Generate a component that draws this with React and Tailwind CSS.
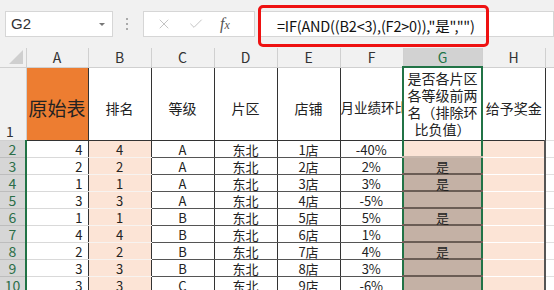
import { X, Check } from 'lucide-react';

const rows = [
    ['4', 'A', '1店', '-40%', ''],
    ['2', 'A', '2店', '2%', '是'],
    ['1', 'A', '3店', '3%', '是'],
    ['3', 'A', '4店', '-5%', ''],
    ['1', 'B', '5店', '5%', '是'],
    ['4', 'B', '6店', '1%', ''],
    ['2', 'B', '7店', '4%', '是'],
    ['3', 'B', '8店', '3%', ''],
    ['3', 'C', '9店', '-6%', ''],
];

const cols = ['A', 'B', 'C', 'D', 'E', 'F', 'G', 'H'];
const widths = [62, 63, 63, 63, 63, 63, 79, 63];

export default function App() {
    return (
        <div className="w-[554px] h-[290px] overflow-hidden bg-white text-[#222] font-['Noto_Sans_CJK_SC',sans-serif]">
            {/* Formula bar */}
            <div className="h-[48px] bg-[#f1f1f1] flex items-center relative">
                <div className="ml-[5px] w-[108px] h-[26px] bg-white border border-[#d6d6d6] flex items-center justify-between pl-[5px] pr-[7px]">
                    <span className="text-[15px] font-['Liberation_Sans',sans-serif] text-[#333]">G2</span>
                    <span className="border-x-[3px] border-x-transparent border-t-[3px] border-t-[#777]" />
                </div>
                <div className="ml-[13px] flex flex-col gap-[3px]">
                    <span className="w-[2px] h-[2px] bg-[#aaa]" />
                    <span className="w-[2px] h-[2px] bg-[#aaa]" />
                    <span className="w-[2px] h-[2px] bg-[#aaa]" />
                </div>
                <div className="ml-[15px] w-[112px] h-[26px] bg-white border border-[#d6d6d6] flex items-center pl-[12px]">
                    <X className="w-[16px] h-[16px] text-[#c4c4c4]" strokeWidth={1.5} />
                    <Check className="ml-[16px] w-[16px] h-[16px] text-[#c4c4c4]" strokeWidth={1.5} />
                    <span className="ml-[16px] text-[16px] italic font-['Liberation_Serif',serif] text-[#555]">f<span className="text-[12px]">x</span></span>
                </div>
                <div className="flex-1 h-[26px] ml-[4px] bg-white border border-[#d6d6d6]" />
                <div className="absolute left-[258px] top-[5px] w-[231px] h-[42px] border-[3px] border-[#ee1111] rounded-[5px] flex items-center pl-[16px] pb-[1px] whitespace-nowrap text-[14.5px] tracking-[-0.2px] text-[#111] font-['Noto_Sans_CJK_SC',sans-serif]">
                    =IF(AND((B2&lt;3),(F2&gt;0)),"是","")
                </div>
            </div>

            <table className="table-fixed border-collapse w-[554px] text-[13px] leading-none">
                <colgroup>
                    <col className="w-[26px]" />
                    {widths.map((w, i) => (
                        <col key={i} style={{ width: w }} />
                    ))}
                    <col />
                </colgroup>
                <thead>
                    <tr className="h-[19px]">
                        <th className="bg-[#f1f1f1] border-b border-[#d0d0d0] relative">
                            <span className="absolute right-[3px] bottom-[3px] border-l-[14px] border-l-transparent border-b-[14px] border-b-[#cfcfcf]" />
                        </th>
                        {cols.map((c) => (
                            <th
                                key={c}
                                className={`font-normal text-[14px] border-x border-[#d0d0d0] ${c === 'G' ? 'bg-[#d2d2d2] border-b-2 border-b-[#217346] text-[#217346]' : 'bg-[#f1f1f1] border-b border-b-[#d0d0d0] text-[#333]'}`}
                            >
                                {c}
                            </th>
                        ))}
                        <th className="bg-[#f1f1f1] border-b border-[#d0d0d0]" />
                    </tr>
                </thead>
                <tbody>
                    <tr className="h-[73px] text-[14px]">
                        <td className="bg-[#f1f1f1] border-r border-[#d0d0d0] border-b border-b-[#d0d0d0] text-[#333] align-bottom pl-[6px] pb-[2px]">1</td>
                        <td className="bg-[#ed7d31] text-[19px] text-center whitespace-nowrap border-r border-[#333] border-b border-b-[#333] pt-[8px]">原始表</td>
                        <td className="text-center border-r border-[#333] border-b border-b-[#333] pt-[8px]">排名</td>
                        <td className="text-center border-r border-[#333] border-b border-b-[#333] pt-[8px]">等级</td>
                        <td className="text-center border-r border-[#333] border-b border-b-[#333] pt-[8px]">片区</td>
                        <td className="text-center border-r border-[#333] border-b border-b-[#333] pt-[8px]">店铺</td>
                        <td className="border-r border-[#333] border-b border-b-[#333] pt-[8px] overflow-hidden whitespace-nowrap text-[13.5px]">月业绩环比</td>
                        <td className="text-center border-x-2 border-t-2 border-[#217346] border-b border-b-[#333] leading-[17px] pt-[1px]">
                            是否各片区<br />各等级前两<br />名（排除环<br />比负值）
                        </td>
                        <td className="text-center border-r border-[#333] border-b border-b-[#333] pt-[8px]">给予奖金</td>
                        <td className="border-b border-[#e0e0e0]" />
                    </tr>
                    {rows.map((r, i) => (
                        <tr key={i} className="h-[17px]">
                            <td className="bg-[#d6d6d6] text-[#2b6e48] text-[14px] text-center border-r-2 border-r-[#217346] border-b border-b-[#bdbdbd]">{i + 2}</td>
                            <td className="text-right pr-[5px] pt-[1px] border-r border-[#333] border-b border-b-[#d9d9d9]">{r[0]}</td>
                            <td className="bg-[#fce4d6] text-center pt-[1px] border-r border-[#333] border-b border-b-[#f7f3f0]">{r[0]}</td>
                            <td className="text-center pt-[1px] border-r border-[#333] border-b border-b-[#555]">{r[1]}</td>
                            <td className="text-center pt-[1px] border-r border-[#333] border-b border-b-[#555]">东北</td>
                            <td className="text-center pt-[1px] border-r border-[#333] border-b border-b-[#555]">{r[2]}</td>
                            <td className="text-center pt-[1px] border-r border-[#333] border-b border-b-[#555]">{r[3]}</td>
                            <td className={`text-center pt-[1px] border-x-2 border-[#217346] border-b-2 ${i === 0 ? 'bg-[#fce4d6] border-b-[#c9b8ad]' : 'bg-[#c4b1a5] border-b-[#6b5d55]'}`}>{r[4]}</td>
                            <td className="bg-[#fce4d6] border-r-2 border-[#555] border-b border-b-[#fff]" />
                            <td className="border-b border-[#e0e0e0]" />
                        </tr>
                    ))}
                </tbody>
            </table>
        </div>
    );
}
